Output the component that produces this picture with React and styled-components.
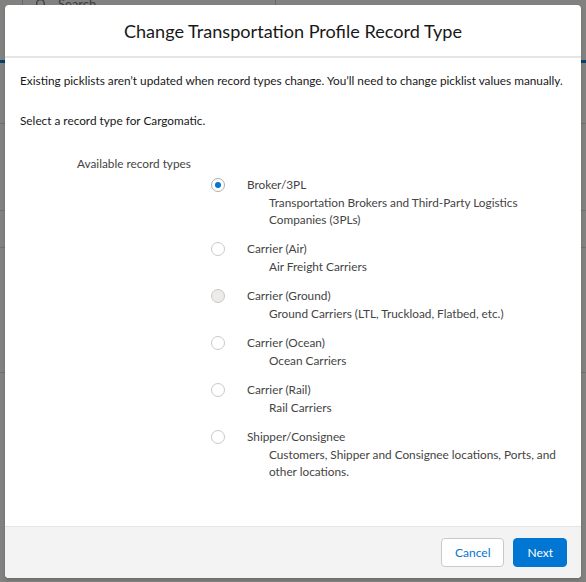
import React, { useState } from 'react'
import styled, { createGlobalStyle } from 'styled-components'

const GlobalStyle = createGlobalStyle`
    html, body {
        margin: 0;
        padding: 0;
    }
    body {
        font-family: Lato, "Open Sans", sans-serif;
        color: #181818;
    }
`;

const Screen = styled.div`
    position: relative;
    width: 586px;
    height: 582px;
    overflow: hidden;
    background: #fafaf9;
`;

/* the record page that sits under the dimmed overlay */
const PageHeader = styled.div`
    height: 60px;
    border-bottom: 3px solid #0176d3;
    display: flex;
    align-items: flex-start;
    padding-left: 22px;
`;

const SearchBox = styled.div`
    width: 240px;
    height: 30px;
    margin-top: -12px;
    border: 1px solid #c9c9c9;
    border-radius: 4px;
    display: flex;
    align-items: center;
    gap: 10px;
    padding-left: 12px;
    font-size: 13px;
    color: #747474;
`;

const PageRow = styled.div`
    height: ${p => p.h}px;
    border-bottom: 1px solid #dddbda;
`;

const Overlay = styled.div`
    position: absolute;
    inset: 0;
    background: rgba(8, 7, 7, 0.5);
    padding: 5px 5px 4px 5px;
    box-sizing: border-box;
    display: flex;
`;

const Modal = styled.div`
    flex: 1;
    background: #fff;
    border-radius: 4px;
    display: flex;
    flex-direction: column;
    overflow: hidden;
    box-shadow: 0 2px 3px rgba(0, 0, 0, 0.16);
`;

const Header = styled.div`
    height: 51px;
    border-bottom: 2px solid #e5e5e5;
    display: flex;
    align-items: center;
    justify-content: center;
`;

const Title = styled.h2`
    margin: 0;
    font-size: 18.1px;
    font-weight: 400;
    color: #181818;
`;

const Body = styled.div`
    flex: 1;
    padding: 14px 15px 0 15px;
    font-size: 11.8px;
`;

const Note = styled.p`
    margin: 0 0 22px 0;
    line-height: 18px;
    color: #181818;
`;

const Fieldset = styled.div`
    padding-left: 57px;
    margin-top: 25px;
`;

const Legend = styled.div`
    color: #444;
    line-height: 18px;
    margin-bottom: 3px;
`;

const Options = styled.div`
    display: flex;
    flex-direction: column;
    gap: 12px;
    padding-left: 134px;
`;

const Option = styled.label`
    display: grid;
    grid-template-columns: 36px 1fr;
    cursor: ${p => (p.disabled ? 'default' : 'pointer')};
`;

const Radio = styled.span`
    width: 14px;
    height: 14px;
    margin-top: 2px;
    border-radius: 50%;
    box-sizing: border-box;
    border: 1px solid ${p => (p.checked ? '#b0adab' : '#c9c9c9')};
    background: ${p => (p.disabled ? '#ecebea' : '#fff')};
    display: flex;
    align-items: center;
    justify-content: center;

    &::after {
        content: '';
        width: 6px;
        height: 6px;
        border-radius: 50%;
        background: #0176d3;
        display: ${p => (p.checked ? 'block' : 'none')};
    }
`;

const OptionText = styled.div`
    color: #444;
`;

const OptionName = styled.div`
    line-height: 18px;
`;

const OptionDesc = styled.div`
    line-height: 17px;
    padding-left: 22px;
    max-width: 290px;
`;

const Footer = styled.div`
    height: 51px;
    background: #f3f3f3;
    border-top: 1px solid #e5e5e5;
    display: flex;
    align-items: center;
    justify-content: flex-end;
    gap: 9px;
    padding-right: 14px;
`;

const Button = styled.button`
    height: 29px;
    padding: 0 13px;
    border-radius: 4px;
    font-family: inherit;
    font-size: 12px;
    border: 1px solid ${p => (p.primary ? '#0176d3' : '#c9c9c9')};
    background: ${p => (p.primary ? '#0176d3' : '#fff')};
    color: ${p => (p.primary ? '#fff' : '#0176d3')};
    cursor: pointer;
`;

const recordTypes = [
    { name: 'Broker/3PL', desc: 'Transportation Brokers and Third-Party Logistics Companies (3PLs)' },
    { name: 'Carrier (Air)', desc: 'Air Freight Carriers' },
    { name: 'Carrier (Ground)', desc: 'Ground Carriers (LTL, Truckload, Flatbed, etc.)', disabled: true },
    { name: 'Carrier (Ocean)', desc: 'Ocean Carriers' },
    { name: 'Carrier (Rail)', desc: 'Rail Carriers' },
    { name: 'Shipper/Consignee', desc: 'Customers, Shipper and Consignee locations, Ports, and other locations.' },
];

export default function App() {
    const [selected, setSelected] = useState('Broker/3PL')

    return (
        <Screen>
            <GlobalStyle />
            <PageHeader>
                <SearchBox>
                    <svg width="13" height="13" viewBox="0 0 24 24" fill="none" stroke="#747474" strokeWidth="2.5">
                        <circle cx="10" cy="10" r="7" />
                        <line x1="15" y1="15" x2="21" y2="21" />
                    </svg>
                    Search
                </SearchBox>
            </PageHeader>
            <PageRow h={60} />
            <PageRow h={86} />
            <PageRow h={36} />
            <PageRow h={124} />

            <Overlay>
                <Modal>
                    <Header>
                        <Title>Change Transportation Profile Record Type</Title>
                    </Header>
                    <Body>
                        <Note>Existing picklists aren’t updated when record types change. You’ll need to change picklist values manually.</Note>
                        <Note>Select a record type for Cargomatic.</Note>
                        <Fieldset>
                            <Legend>Available record types</Legend>
                            <Options>
                                {recordTypes.map(rt => (
                                    <Option key={rt.name} disabled={rt.disabled} onClick={() => !rt.disabled && setSelected(rt.name)}>
                                        <Radio checked={selected === rt.name} disabled={rt.disabled} />
                                        <OptionText>
                                            <OptionName>{rt.name}</OptionName>
                                            <OptionDesc>{rt.desc}</OptionDesc>
                                        </OptionText>
                                    </Option>
                                ))}
                            </Options>
                        </Fieldset>
                    </Body>
                    <Footer>
                        <Button>Cancel</Button>
                        <Button primary>Next</Button>
                    </Footer>
                </Modal>
            </Overlay>
        </Screen>
    )
}
